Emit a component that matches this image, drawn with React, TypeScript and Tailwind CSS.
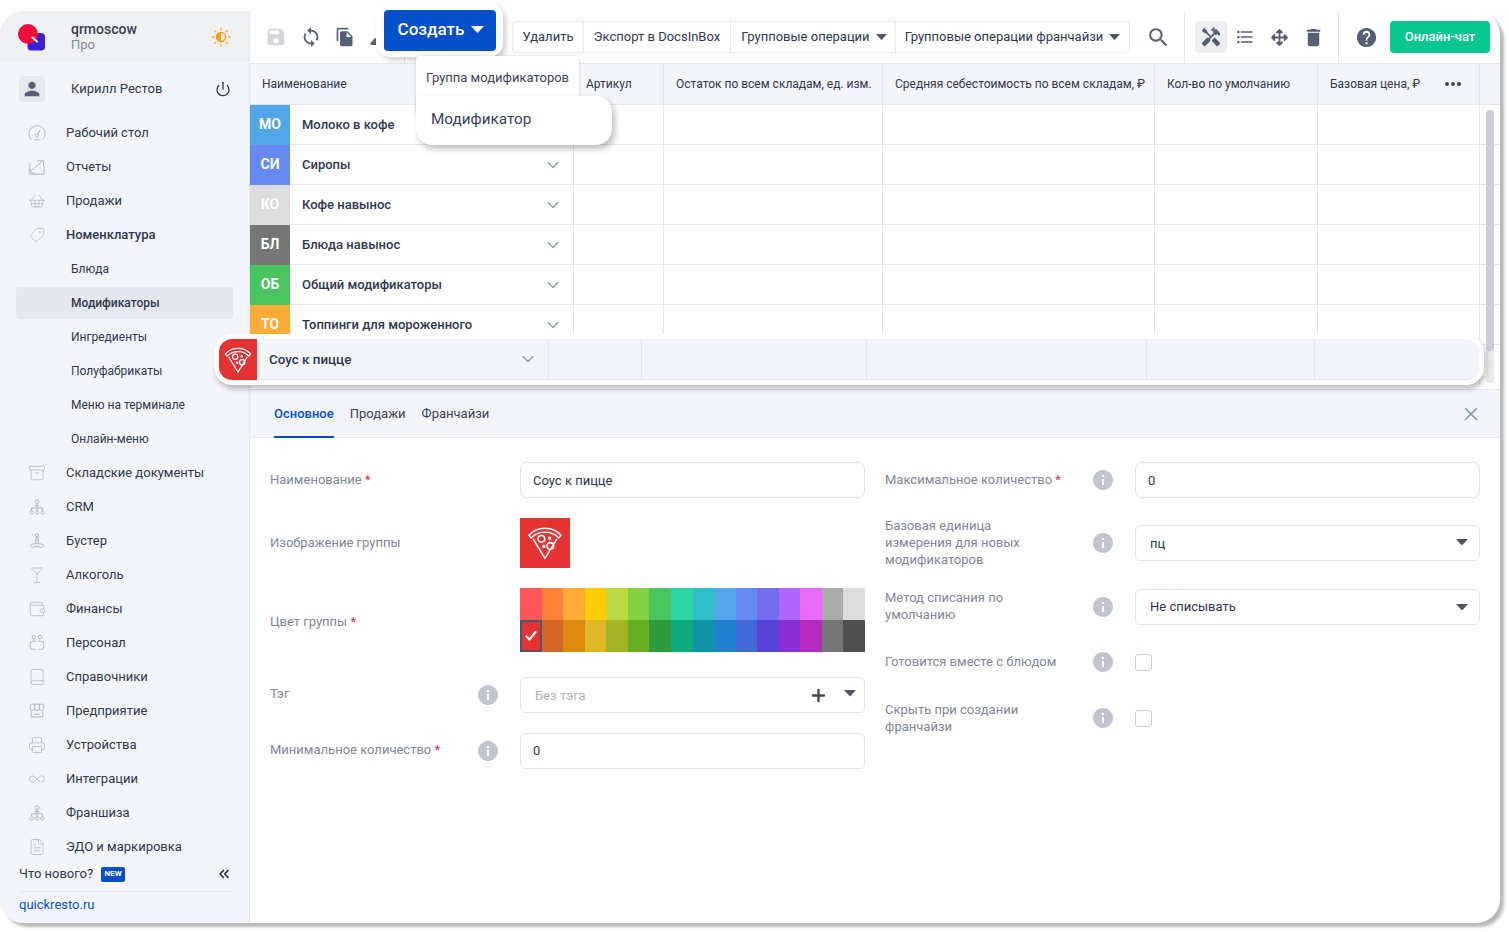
import React from 'react';
import {
  Archive, Book, ChevronDown, ChevronsLeft, FileText, Infinity as InfinityIcon, Martini,
  Plus, Power, Printer, ShoppingBasket, Tag, Wallet, X,
} from 'lucide-react';
import { FaArrowsAlt } from 'react-icons/fa';
import {
  MdDelete, MdFileCopy, MdHandyman, MdHelp, MdInfo, MdFormatListBulleted, MdPerson, MdSave, MdSearch, MdSync,
} from 'react-icons/md';

const thin = { size: 18, strokeWidth: 1, className: 'text-[#aeb4bf]' };

const SvgBase: React.FC<{ children: React.ReactNode }> = ({ children }) => (
  <svg width="18" height="18" viewBox="0 0 20 20" fill="none" stroke="#aeb4bf" strokeWidth="1.100">
    {children}
  </svg>
);

const GaugeIcon = () => (
  <SvgBase>
    <path d="M3.500 17a9 9 0 1 1 13 0M7 17.500h6" />
    <circle cx="10" cy="13" r="1.700" />
    <path d="M11 11.500l2.500-5" />
  </SvgBase>
);

const ReportIcon = () => (
  <SvgBase>
    <path d="M2 6v12h16V9M2 15 16 4M10 3h7v6M2 15l6 3" />
  </SvgBase>
);

const OrgIcon = () => (
  <SvgBase>
    <circle cx="10" cy="4" r="2" />
    <path d="M10 6v5M4 14v-3h12v3M10 11v3M7.5 8.5h5" />
    <circle cx="4" cy="16" r="1.8" />
    <circle cx="10" cy="16" r="1.8" />
    <circle cx="16" cy="16" r="1.8" />
  </SvgBase>
);

const BusterIcon = () => (
  <SvgBase>
    <circle cx="10" cy="3.500" r="1.700" />
    <path d="M9 6h2l.4 7H8.600zM8.600 13c-3 0-6 .8-6 2.400 0 1.200 2 1.600 3.400 1.600 1.600 0 2.600-1 4-1s2.400 1 4 1c1.400 0 3.400-.4 3.400-1.600 0-1.600-3-2.400-6-2.400" />
  </SvgBase>
);

const StaffIcon = () => (
  <SvgBase>
    <circle cx="6.500" cy="3.500" r="2" />
    <circle cx="13.500" cy="3.500" r="2" />
    <path d="M9 8H5a2.500 2.500 0 0 0-2.500 2.500v4A2.500 2.500 0 0 0 5 17h3M11 8h4a2.500 2.500 0 0 1 2.500 2.500v4A2.500 2.500 0 0 1 15 17h-3" />
  </SvgBase>
);

const StoreIcon = () => (
  <SvgBase>
    <path d="M4 2.500h12a1.500 1.500 0 0 1 1.500 1.500v4a2 2 0 0 1-2.500 1.500 2.500 2.500 0 0 1-2.500-1.500A2.500 2.500 0 0 1 10 9.500 2.500 2.500 0 0 1 7.500 8 2.500 2.500 0 0 1 5 9.500 2 2 0 0 1 2.500 8V4A1.500 1.500 0 0 1 4 2.500zM7.500 3v5M12.500 3v5M3.500 10.500v6h13v-6M7 13.500h6" />
  </SvgBase>
);

const Pizza: React.FC<{ size: number }> = ({ size }) => (
  <svg width={size} height={size} viewBox="0 0 32 32" fill="none" stroke="#fff" strokeWidth="1.300" strokeLinejoin="round">
    <path d="M2.500 9.500C5.500 6 10.500 3.500 16 3.500s10.500 2.500 13.500 6l-1.800 2.300C25 9 20.500 7 16 7S7 9 4.300 11.800z" />
    <path d="M6 12.500 16 29l10-16.500" />
    <circle cx="13" cy="12.500" r="2.800" />
    <circle cx="20.500" cy="18.500" r="2.800" />
    <circle cx="20" cy="12" r=".8" />
    <circle cx="15" cy="19" r=".8" />
  </svg>
);

const Caret: React.FC<{ color?: string; w?: number }> = ({ color = '#4b5563', w = 11 }) => (
  <svg width={w} height={w * 0.55} viewBox="0 0 11 6" fill={color}>
    <path d="M0 0h11L5.500 6z" />
  </svg>
);

const Info = () => <MdInfo size={24} className="text-[#c0c5d0] shrink-0" />;

const navItems: { label: string; icon: React.ReactNode; sub?: boolean; bold?: boolean; active?: boolean }[] = [
  { label: 'Рабочий стол', icon: <GaugeIcon /> },
  { label: 'Отчеты', icon: <ReportIcon /> },
  { label: 'Продажи', icon: <ShoppingBasket {...thin} /> },
  { label: 'Номенклатура', icon: <Tag {...thin} size={16} className="text-[#aeb4bf] -scale-x-100" />, bold: true },
  { label: 'Блюда', icon: null, sub: true },
  { label: 'Модификаторы', icon: null, sub: true, bold: true, active: true },
  { label: 'Ингредиенты', icon: null, sub: true },
  { label: 'Полуфабрикаты', icon: null, sub: true },
  { label: 'Меню на терминале', icon: null, sub: true },
  { label: 'Онлайн-меню', icon: null, sub: true },
  { label: 'Складские документы', icon: <Archive {...thin} /> },
  { label: 'CRM', icon: <OrgIcon /> },
  { label: 'Бустер', icon: <BusterIcon /> },
  { label: 'Алкоголь', icon: <Martini {...thin} /> },
  { label: 'Финансы', icon: <Wallet {...thin} /> },
  { label: 'Персонал', icon: <StaffIcon /> },
  { label: 'Справочники', icon: <Book {...thin} /> },
  { label: 'Предприятие', icon: <StoreIcon /> },
  { label: 'Устройства', icon: <Printer {...thin} /> },
  { label: 'Интеграции', icon: <InfinityIcon {...thin} /> },
  { label: 'Франшиза', icon: <OrgIcon /> },
  { label: 'ЭДО и маркировка', icon: <FileText {...thin} /> },
];

const rows = [
  { tag: 'МО', name: 'Молоко в кофе', color: 'bg-[#52a6e8]' },
  { tag: 'СИ', name: 'Сиропы', color: 'bg-[#6789f2]' },
  { tag: 'КО', name: 'Кофе навынос', color: 'bg-[#dcdcdc]' },
  { tag: 'БЛ', name: 'Блюда навынос', color: 'bg-[#767676]' },
  { tag: 'ОБ', name: 'Общий модификаторы', color: 'bg-[#4ac45e]' },
  { tag: 'ТО', name: 'Топпинги для мороженного', color: 'bg-[#ffab38]' },
];

const paletteTop = ['#ff5858', '#ff8138', '#ffab38', '#ffce00', '#bdd943', '#86d044', '#4ac45e', '#2dd4a4', '#30bfc9', '#52a6e8', '#6789f2', '#766cf2', '#b068fc', '#e96bf5', '#ababab', '#dcdcdc'];
const paletteBottom = ['#e53333', '#d26727', '#df880e', '#dfb726', '#9fb525', '#65af21', '#2e9a3e', '#0daa7d', '#1293a8', '#2280ce', '#4168d4', '#5744d6', '#8a2fd6', '#b52bbf', '#767676', '#4f4f4f'];

const inputCls = 'h-9 rounded-[6px] border border-[#dde1ea] bg-white flex items-center text-[13px] text-[#2c3448]';

const Sidebar = () => (
  <aside className="w-[250px] shrink-0 h-full bg-[#f4f5fa] border-r border-[#e6e8ee] rounded-l-[24px] overflow-hidden flex flex-col text-[13px] text-[#2f3850]">
    <div className="h-[52px] bg-[#eff0f4] flex items-center relative shrink-0">
      <svg width="28" height="28" viewBox="0 0 28 28" className="ml-[18px] mt-[1px]">
        <rect x="9.500" y="9" width="17.500" height="17.500" rx="4" fill="#3a1fd6" />
        <circle cx="10" cy="10" r="10" fill="#f00f3c" />
        <path d="M14.500 13.500l4.500 4" stroke="#fff" strokeWidth="2" strokeLinecap="round" />
      </svg>
      <div className="ml-[25px] leading-[16px]">
        <div className="text-[14px] font-medium text-[#3b4254]">qrmoscow</div>
        <div className="text-[13px] text-[#858b9b]">Про</div>
      </div>
      <svg width="20" height="20" viewBox="0 0 20 20" className="ml-auto mr-[18px]">
        <circle cx="10" cy="10" r="4.500" fill="none" stroke="#ff9a1f" strokeWidth="1.500" />
        <path d="M10 5.500a4.500 4.500 0 0 0 0 9z" fill="#ff9a1f" />
        <path d="M10 .8v2M10 17.200v2M.8 10h2M17.200 10h2M3.500 3.500l1.400 1.400M15.100 15.100l1.400 1.400M3.500 16.500l1.400-1.400M15.100 4.900l1.400-1.400" stroke="#ffb020" strokeWidth="1.300" strokeLinecap="round" />
      </svg>
    </div>
    <div className="mt-[13px] h-[26px] flex items-center pl-[19px] pr-[18px] shrink-0">
      <div className="w-[26px] h-[26px] rounded-[4px] bg-[#e6e8ef] flex items-center justify-center">
        <MdPerson size={22} className="text-[#565f75]" />
      </div>
      <span className="ml-[26px]">Кирилл Рестов</span>
      <Power size={16} strokeWidth={2} className="ml-auto text-[#2f3850]" />
    </div>
    <nav className="mt-[14px] shrink-0">
      {navItems.map((item) => (
        <div key={item.label} className="h-[34px] flex items-center">
          {item.sub ? (
            <div className={`ml-4 w-[217px] h-8 rounded-[4px] flex items-center pl-[55px] text-[12px] ${item.active ? 'bg-[#e6e8ef]' : ''} ${item.bold ? 'font-medium' : ''}`}>
              {item.label}
            </div>
          ) : (
            <>
              <span className="w-[20px] ml-[27px] flex justify-center">{item.icon}</span>
              <span className={`ml-[19px] ${item.bold ? 'font-medium' : ''}`}>{item.label}</span>
            </>
          )}
        </div>
      ))}
    </nav>
    <div className="h-5 flex items-center pl-[19px] pr-[17px] shrink-0">
      <span className="text-[#2f3850]">Что нового?</span>
      <span className="ml-2 w-6 h-[15px] rounded-[2px] bg-[#0550c8] text-white text-[8px] font-bold flex items-center justify-center">NEW</span>
      <ChevronsLeft size={16} strokeWidth={2.600} className="ml-auto text-[#2f3850]" />
    </div>
    <div className="mx-[19px] mt-[7px] border-t border-[#e6e8ee]" />
    <a className="ml-[19px] mt-[3px] text-[#0550c8]">quickresto.ru</a>
  </aside>
);

const Toolbar = () => (
  <div className="h-[53px] shrink-0 border-b border-[#e4e6ec] flex items-center text-[#566075] rounded-tr-[24px]">
    <MdSave size={22} className="ml-[15px] text-[#d2d5dc]" />
    <MdSync size={22} className="ml-[13px]" />
    <MdFileCopy size={20} className="ml-[13px]" />
    <svg width="7" height="10" viewBox="0 0 7 10" fill="#566075" className="ml-[15px] mt-[8px]">
      <path d="M5 2h2v7H1.500A1.500 1.500 0 0 1 1 6.500z" />
    </svg>
    <div className="ml-[27px] h-full border-l border-[#e4e6ec]" />
    <div className="ml-[107px] h-8 flex rounded-[4px] border border-[#e6e8ee] text-[13px] text-[#2f3850]">
      <span className="w-[71px] flex items-center justify-center border-r border-[#e6e8ee]">Удалить</span>
      <span className="w-[147px] flex items-center justify-center border-r border-[#e6e8ee]">Экспорт в DocsInBox</span>
      <span className="w-[165px] flex items-center justify-center gap-[6px] border-r border-[#e6e8ee] pl-[2px]">Групповые операции <Caret /></span>
      <span className="w-[233px] flex items-center justify-center gap-[6px]">Групповые операции франчайзи <Caret /></span>
    </div>
    <MdSearch size={25} className="ml-[16px]" />
    <div className="ml-[13px] h-full border-l border-[#e4e6ec]" />
    <div className="ml-[10px] w-8 h-8 rounded-[4px] bg-[#eceef2] flex items-center justify-center">
      <MdHandyman size={22} />
    </div>
    <MdFormatListBulleted size={20} className="ml-2" />
    <FaArrowsAlt size={17} className="ml-4" />
    <MdDelete size={23} className="ml-[14px]" />
    <div className="ml-[13px] h-full border-l border-[#e4e6ec]" />
    <MdHelp size={23} className="ml-4" />
    <div className="ml-[12px] w-[100px] h-8 rounded-[4px] bg-[#07c692] text-white text-[13px] font-medium flex items-center justify-center">Онлайн-чат</div>
  </div>
);

const cols = ['w-[90px]', 'w-[219px]', 'w-[272px]', 'w-[163px]', 'w-[162px]'];

const Table = () => (
  <div className="h-[326px] shrink-0 overflow-hidden relative text-[12px] text-[#2f3850] border-b border-[#e4e6ec]">
    <div className="h-[41px] bg-[#f4f5fa] border-b border-[#e4e6ec] flex items-center">
      <div className="w-[324px] h-full pl-3 flex items-center border-r border-[#e4e6ec]">Наименование</div>
      <div className="w-[90px] h-full pl-3 flex items-center border-r border-[#e4e6ec]">Артикул</div>
      <div className="w-[219px] h-full pl-3 flex items-center border-r border-[#e4e6ec] whitespace-nowrap">Остаток по всем складам, ед. изм.</div>
      <div className="w-[272px] h-full pl-3 flex items-center border-r border-[#e4e6ec] whitespace-nowrap">Средняя себестоимость по всем складам, ₽</div>
      <div className="w-[163px] h-full pl-3 flex items-center border-r border-[#e4e6ec]">Кол-во по умолчанию</div>
      <div className="w-[162px] h-full pl-3 flex items-center justify-between pr-[18px] border-r border-[#e4e6ec]">
        Базовая цена, ₽
        <span className="flex gap-[2px]">
          <i className="w-1 h-1 rounded-full bg-[#3b4254]" />
          <i className="w-1 h-1 rounded-full bg-[#3b4254]" />
          <i className="w-1 h-1 rounded-full bg-[#3b4254]" />
        </span>
      </div>
    </div>
    {rows.map((r) => (
      <div key={r.tag} className="h-10 flex border-b border-[#e4e6ec]">
        <div className="w-[324px] flex items-center border-r border-[#e4e6ec]">
          <div className={`w-10 h-10 shrink-0 ${r.color} text-white text-[14px] font-bold flex items-center justify-center`}>{r.tag}</div>
          <span className="ml-3 text-[13px] font-medium">{r.name}</span>
          <ChevronDown size={20} strokeWidth={1.800} className="ml-auto mr-[10px] text-[#8fa3b1]" />
        </div>
        {cols.map((c) => (
          <div key={c} className={`${c} border-r border-[#e4e6ec]`} />
        ))}
      </div>
    ))}
    <div className="h-10 flex">
      <div className="w-[324px] border-r border-[#e4e6ec]" />
      {cols.map((c) => (
        <div key={c} className={`${c} border-r border-[#e4e6ec]`} />
      ))}
    </div>
    <div className="absolute left-[1236px] top-[46px] w-2 h-[273px] rounded-full bg-[#e6e8ee]">
      <div className="w-2 h-[241px] rounded-full bg-[#cbced6]" />
    </div>
  </div>
);

const Req = () => <span className="text-[#f0284a]"> *</span>;

const Form = () => (
  <div className="flex-1 px-5 pt-6 flex gap-5 text-[13px] text-[#7f8698] leading-[17px]">
    <div className="w-[595px] shrink-0 flex flex-col">
      <div className="flex items-center">
        <div className="w-[250px] -mt-[2px]">Наименование<Req /></div>
        <div className={`${inputCls} flex-1 pl-3`}>Соус к пицце</div>
      </div>
      <div className="flex items-center mt-5">
        <div className="w-[250px] -mt-[2px]">Изображение группы</div>
        <div className="w-[50px] h-[50px] bg-[#e53333] flex items-center justify-center"><Pizza size={38} /></div>
      </div>
      <div className="flex items-center mt-5">
        <div className="w-[250px] mt-[2px]">Цвет группы<Req /></div>
        <div className="flex-1 grid grid-cols-[repeat(16,1fr)] grid-rows-[32px_32px]">
          {paletteTop.map((c) => (
            <div key={c} style={{ backgroundColor: c }} />
          ))}
          {paletteBottom.map((c, i) =>
            i === 0 ? (
              <div key={c} style={{ backgroundColor: c }} className="border-2 border-[#4f5568] flex items-center justify-center">
                <svg width="14" height="14" viewBox="0 0 14 14" fill="none" stroke="#fff" strokeWidth="2.200" strokeLinecap="round" strokeLinejoin="round">
                  <path d="M2.500 7.500l3 3 6-7.500" />
                </svg>
              </div>
            ) : (
              <div key={c + i} style={{ backgroundColor: c }} />
            ),
          )}
        </div>
      </div>
      <div className="flex items-center mt-[25px]">
        <div className="w-[206px] -mt-1">Тэг</div>
        <Info />
        <div className="w-5" />
        <div className={`${inputCls} flex-1 pl-[14px] pr-2 text-[#aeb2bb]`}>
          Без тэга
          <Plus size={19} strokeWidth={3} className="ml-auto text-[#4a4a4a]" />
          <span className="ml-[16px] -mt-[3px]"><Caret w={12} /></span>
        </div>
      </div>
      <div className="flex items-center mt-5">
        <div className="w-[206px] -mt-1">Минимальное количество<Req /></div>
        <Info />
        <div className="w-5" />
        <div className={`${inputCls} flex-1 pl-3 pb-[1px]`}>0</div>
      </div>
    </div>
    <div className="flex-1 flex flex-col">
      <div className="flex items-center">
        <div className="w-[206px] -mt-[2px]">Максимальное количество<Req /></div>
        <Info />
        <div className="w-5" />
        <div className={`${inputCls} flex-1 pl-3`}>0</div>
      </div>
      <div className="flex items-center mt-[19px]">
        <div className="w-[206px] pr-[40px]">Базовая единица измерения для новых модификаторов</div>
        <Info />
        <div className="w-5" />
        <div className={`${inputCls} flex-1 pl-[14px] pr-[11px] justify-between`}><span className="mt-[2px]">пц</span> <Caret w={12} /></div>
      </div>
      <div className="flex items-center mt-[21px]">
        <div className="w-[206px] pr-[60px] -mt-[2px]">Метод списания по умолчанию</div>
        <Info />
        <div className="w-5" />
        <div className={`${inputCls} flex-1 pl-[14px] pr-[11px] justify-between`}><span className="-mt-[2px]">Не списывать</span> <Caret w={12} /></div>
      </div>
      <div className="flex items-center h-[34px] mt-5">
        <div className="w-[206px] -mt-[2px]">Готовится вместе с блюдом</div>
        <Info />
        <div className="w-5" />
        <div className="w-[17px] h-[17px] rounded-[3px] border border-[#c6ccd8] bg-white" />
      </div>
      <div className="flex items-center h-[34px] mt-[22px]">
        <div className="w-[206px] pr-[60px]">Скрыть при создании франчайзи</div>
        <Info />
        <div className="w-5" />
        <div className="w-[17px] h-[17px] rounded-[3px] border border-[#c6ccd8] bg-white" />
      </div>
    </div>
  </div>
);

const Details = () => (
  <div className="flex-1 flex flex-col">
    <div className="h-[48px] shrink-0 bg-[#f4f5fa] border-b border-[#e4e6ec] flex items-stretch pl-6 pr-[18px] text-[13px] text-[#3b4254] gap-4">
      <div className="flex items-center border-b-2 border-[#0550c8] -mb-px pt-[2px] font-medium text-[#0550c8]">Основное</div>
      <div className="flex items-center">Продажи</div>
      <div className="flex items-center">Франчайзи</div>
      <X size={22} strokeWidth={1.600} className="ml-auto self-center text-[#7a96a8]" />
    </div>
    <Form />
  </div>
);

export default function App() {
  return (
    <div className="w-[1509px] h-[932px] overflow-hidden bg-white pt-[11px] font-[family-name:Roboto,sans-serif]">
      <div className="relative w-[1500px] h-[912px] rounded-[24px] bg-white flex shadow-[4px_4px_3px_rgba(0,0,0,0.28)]">
        <Sidebar />
        <main className="flex-1 min-w-0 flex flex-col">
          <Toolbar />
          <Table />
          <Details />
        </main>

        {/* create button */}
        <div className="absolute left-[376px] -top-2 w-[127px] h-[54px] rounded-[14px] bg-white shadow-[3px_3px_5px_rgba(0,0,0,0.18)] flex items-center pl-2">
          <div className="w-[112px] h-[41px] rounded-[4px] bg-[#0550c8] pl-[2px] text-white text-[17px] font-medium flex items-center justify-center gap-[7px]">
            Создать <Caret color="#fff" w={13} />
          </div>
        </div>

        {/* create menu */}
        <div className="absolute left-[416px] top-[45px] w-[163px] h-[60px] bg-white rounded-t-[3px] shadow-[0_0_3px_rgba(0,0,0,0.2)] pl-[10px] pt-3 text-[13px] text-[#3b4254]">
          Группа модификаторов
        </div>
        <div className="absolute left-[416px] top-[85px] w-[196px] h-[49px] bg-white rounded-[16px] rounded-tl-none shadow-[3px_4px_6px_rgba(0,0,0,0.25)] flex items-center pl-[15px] pb-[2px] text-[15.300px] text-[#3b4254]">
          Модификатор
        </div>

        {/* selected row */}
        <div className="absolute left-[214px] top-[323px] w-[1270px] h-[51px] rounded-[18px] border-[5px] border-white bg-[#f4f5fa] shadow-[2px_4px_5px_rgba(0,0,0,0.25)] flex text-[13px] text-[#2f3850]">
          <div className="w-[38px] mr-px h-full rounded-l-[13px] bg-[#e53333] flex items-center justify-center shrink-0"><Pizza size={30} /></div>
          <div className="w-[291px] flex items-center border-r border-b border-[#e4e6ec]">
            <span className="ml-[11px] pt-[2px] font-medium text-[13.400px]">Соус к пицце</span>
            <ChevronDown size={20} strokeWidth={1.800} className="ml-auto mr-[10px] text-[#8fa3b1]" />
          </div>
          <div className="w-[93px] border-r border-b border-[#e4e6ec]" />
          <div className="w-[225px] border-r border-b border-[#e4e6ec]" />
          <div className="w-[280px] border-r border-b border-[#e4e6ec]" />
          <div className="w-[168px] border-r border-b border-[#e4e6ec]" />
          <div className="flex-1 border-b border-[#e4e6ec] rounded-br-[13px]" />
        </div>
      </div>
    </div>
  );
}
